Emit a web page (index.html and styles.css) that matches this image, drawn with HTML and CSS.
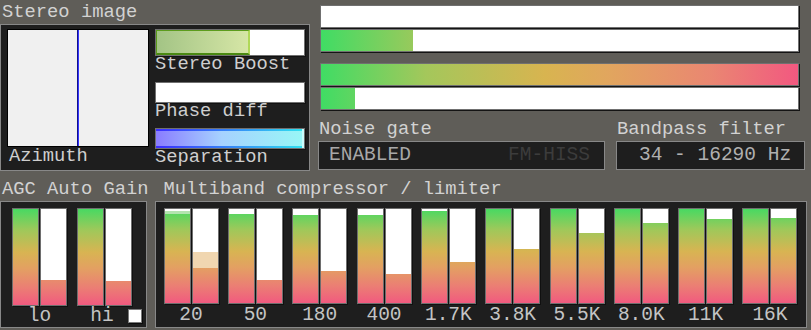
FILE: index.html
```html
<!DOCTYPE html>
<html lang="en">
<head>
    <meta charset="UTF-8">
    <meta name="viewport" content="width=device-width, initial-scale=1.0">
    <title>Audio Processor</title>
    <link rel="stylesheet" href="styles.css">
</head>
<body>
    <div class="top">
        <section class="stereo">
            <div class="title">Stereo image</div>
            <div class="panel stereo-panel">
                <div class="azimuth-col">
                    <div class="azimuth"><div class="azimuth-line"></div></div>
                    <div class="caption azimuth-caption">Azimuth</div>
                </div>
                <div class="stereo-meters">
                    <div class="hbar boost"><div class="boost-fill"></div></div>
                    <div class="caption">Stereo Boost</div>
                    <div class="hbar phase"></div>
                    <div class="caption">Phase diff</div>
                    <div class="hbar sep"><div class="sep-fill"></div></div>
                    <div class="caption">Separation</div>
                </div>
            </div>
        </section>

        <section class="levels">
            <div class="hmeter first"></div>
            <div class="hmeter"><div class="hfill" style="width:92px"></div></div>
            <div class="hmeter second"><div class="hfill" style="width:477px"></div></div>
            <div class="hmeter"><div class="hfill" style="width:34px"></div></div>

            <div class="boxes">
                <div class="gate">
                    <div class="title box-title">Noise gate</div>
                    <div class="panel readout gate-readout">
                        <span>ENABLED</span>
                        <span class="dim">FM-HISS</span>
                    </div>
                </div>
                <div class="bandpass">
                    <div class="title box-title">Bandpass filter</div>
                    <div class="panel readout band-readout">34 - 16290 Hz</div>
                </div>
            </div>
        </section>
    </div>

    <div class="bottom">
        <section class="agc">
            <div class="title">AGC Auto Gain</div>
            <div class="panel agc-panel">
                <div class="agc-bars">
                    <div class="pair">
                        <div class="vbar"><div class="vfill" style="height:96px"></div></div>
                        <div class="vbar"><div class="vfill" style="height:25px"></div></div>
                    </div>
                    <div class="pair">
                        <div class="vbar"><div class="vfill" style="height:96px"></div></div>
                        <div class="vbar"><div class="vfill" style="height:24px"></div></div>
                    </div>
                </div>
                <div class="agc-labels">
                    <span class="scale lo">lo</span>
                    <span class="scale hi">hi</span>
                    <span class="check"></span>
                </div>
            </div>
        </section>

        <section class="multiband">
            <div class="title mb-title">Multiband compressor / limiter</div>
            <div class="panel mb-panel">
                <div class="band">
                    <div class="pair">
                        <div class="vbar"><div class="peak-green"></div><div class="vfill" style="height:89px"></div></div>
                        <div class="vbar"><div class="peak-peach"></div><div class="vfill" style="height:35px"></div></div>
                    </div>
                    <span class="scale">20</span>
                </div>
                <div class="band">
                    <div class="pair">
                        <div class="vbar"><div class="vfill" style="height:89px"></div></div>
                        <div class="vbar"><div class="vfill" style="height:23px"></div></div>
                    </div>
                    <span class="scale">50</span>
                </div>
                <div class="band">
                    <div class="pair">
                        <div class="vbar"><div class="vfill" style="height:88px"></div></div>
                        <div class="vbar"><div class="vfill" style="height:32px"></div></div>
                    </div>
                    <span class="scale">180</span>
                </div>
                <div class="band">
                    <div class="pair">
                        <div class="vbar"><div class="vfill" style="height:88px"></div></div>
                        <div class="vbar"><div class="vfill" style="height:29px"></div></div>
                    </div>
                    <span class="scale">400</span>
                </div>
                <div class="band">
                    <div class="pair">
                        <div class="vbar"><div class="vfill" style="height:92px"></div></div>
                        <div class="vbar"><div class="vfill" style="height:41px"></div></div>
                    </div>
                    <span class="scale">1.7K</span>
                </div>
                <div class="band">
                    <div class="pair">
                        <div class="vbar"><div class="vfill" style="height:94px"></div></div>
                        <div class="vbar"><div class="vfill" style="height:54px"></div></div>
                    </div>
                    <span class="scale">3.8K</span>
                </div>
                <div class="band">
                    <div class="pair">
                        <div class="vbar"><div class="vfill" style="height:94px"></div></div>
                        <div class="vbar"><div class="vfill" style="height:70px"></div></div>
                    </div>
                    <span class="scale">5.5K</span>
                </div>
                <div class="band">
                    <div class="pair">
                        <div class="vbar"><div class="vfill" style="height:94px"></div></div>
                        <div class="vbar"><div class="vfill" style="height:80px"></div></div>
                    </div>
                    <span class="scale">8.0K</span>
                </div>
                <div class="band">
                    <div class="pair">
                        <div class="vbar"><div class="vfill" style="height:94px"></div></div>
                        <div class="vbar"><div class="vfill" style="height:84px"></div></div>
                    </div>
                    <span class="scale">11K</span>
                </div>
                <div class="band">
                    <div class="pair">
                        <div class="vbar"><div class="vfill" style="height:94px"></div></div>
                        <div class="vbar"><div class="vfill" style="height:85px"></div></div>
                    </div>
                    <span class="scale">16K</span>
                </div>
            </div>
        </section>
    </div>
</body>
</html>
```

FILE: styles.css
```css
html, body {
    margin: 0;
    background: #5f5d58;
}
body {
    width: 811px;
    height: 330px;
    overflow: hidden;
    font-family: "Liberation Mono", "DejaVu Sans Mono", monospace;
    color: #d2d2d2;
}
.title {
    font-size: 18.8px;
    line-height: 24px;
    height: 24px;
    padding-left: 2px;
    white-space: nowrap;
}
.panel {
    box-sizing: border-box;
    background: #1e1e1e;
    border: 1px solid #888;
}
.caption {
    font-size: 18.8px;
    line-height: 17px;
    color: #cfcfcf;
    white-space: nowrap;
}

/* top row */
.top {
    display: flex;
    height: 171px;
}
.stereo {
    width: 310px;
}
.stereo-panel {
    height: 147px;
    display: flex;
    padding: 4px 0 0 6px;
}
.azimuth-col {
    width: 142px;
}
.azimuth {
    box-sizing: border-box;
    width: 142px;
    height: 118px;
    background: #f0f0f0;
    border: 1px solid #000;
    position: relative;
}
.azimuth-line {
    position: absolute;
    left: 69px;
    top: 0;
    bottom: 0;
    width: 2px;
    background: linear-gradient(to right, #10108a 50%, #3434ff 50%);
}
.azimuth-caption {
    margin-top: 1px;
    padding-left: 2px;
}
.stereo-meters {
    margin-left: 6px;
    width: 150px;
}
.hbar {
    box-sizing: border-box;
    width: 150px;
    border: 1px solid #707070;
    box-shadow: 1px 1px 0 #111;
    background: #fff;
    display: flex;
}
.boost {
    height: 27px;
}
.boost-fill {
    box-sizing: border-box;
    width: 94px;
    background: linear-gradient(to right, #a3c485, #d6e6a6);
    border-top: 1px solid #5c9c1c;
    border-left: 1px solid #5c9c1c;
    border-bottom: 2px solid #4a8a12;
    border-right: 2px solid #b0d858;
}
.phase {
    height: 21px;
    margin-top: 9px;
}
.sep {
    height: 21px;
    margin-top: 8px;
}
.sep-fill {
    flex: 1;
    border-right: 2px solid #c8fcfc;
    background:
        linear-gradient(to right, #3a2cff, #30e0f0) top / 100% 2px no-repeat,
        linear-gradient(to right, #3a2cff, #30e0f0) bottom / 100% 2px no-repeat,
        linear-gradient(to right, #8a7cff, #a6d2ff 45%, #98f6f6);
}

.levels {
    margin-left: 8px;
    width: 487px;
}
.hmeter {
    box-sizing: border-box;
    width: 479px;
    height: 23px;
    margin: 1px 0 0 2px;
    border: 1px solid #707070;
    box-shadow: 1px 1px 0 #141414;
    background: #fff;
}
.hmeter.first {
    margin-top: 5px;
}
.hmeter.second {
    margin-top: 11px;
}
.hfill {
    height: 100%;
    background: linear-gradient(to right, #40dc64, #a4c75b 22%, #d8b450 47%, #e1a65e 60%, #ea8672 82%, #f25880);
    background-size: 477px 100%;
}
.boxes {
    display: flex;
    margin-top: 7px;
    gap: 11px;
}
.box-title {
    padding-left: 1px;
}
.readout {
    height: 29px;
    font-size: 19.5px;
    line-height: 27px;
    color: #a8a8a8;
    white-space: nowrap;
}
.gate-readout {
    width: 287px;
    display: flex;
    justify-content: space-between;
    padding: 0 14px 0 10px;
}
.dim {
    color: #3c3c3c;
}
.bandpass .readout {
    width: 189px;
    padding-left: 22px;
    color: #b0b0b0;
}

/* bottom row */
.bottom {
    display: flex;
    gap: 6px;
    margin-top: 6px;
}
.agc-panel {
    width: 147px;
    height: 127px;
    padding: 6px 0 0 11px;
}
.agc-bars {
    display: flex;
    gap: 10px;
}
.pair {
    display: flex;
    gap: 1px;
}
.vbar {
    width: 25px;
    height: 94px;
    border: 1px solid #6e6e6e;
    box-shadow: 1px 1px 0 #101010;
    background: #fff;
    display: flex;
    flex-direction: column;
    justify-content: flex-end;
}
.agc .vbar {
    height: 96px;
}
.vfill {
    background: linear-gradient(to bottom, #48d962, #9fc85a 22%, #d8b452 45%, #e3a062 62%, #eb7e74 82%, #f15a7f);
    background-size: 25px 94px;
    background-position: bottom;
}
.agc .vfill {
    background-size: 25px 96px;
}
.peak-green {
    height: 3px;
    background: #b4e4b0;
}
.peak-peach {
    height: 16px;
    background: #f0d6b0;
}
.scale {
    font-size: 19.5px;
    line-height: 17px;
    color: #c4c4c4;
    white-space: nowrap;
}
.agc-labels {
    display: flex;
    margin-top: 2px;
}
.lo {
    width: 55px;
    text-align: center;
}
.hi {
    width: 50px;
    margin-left: 10px;
    text-align: center;
}
.check {
    width: 12px;
    height: 12px;
    margin: 1px 0 0 1px;
    background: #fff;
    border: 1px solid #7a7a7a;
    box-shadow: 1px 1px 0 #0c0c0c;
}

.multiband {
    width: 652px;
}
.mb-title {
    padding-left: 9px;
}
.mb-panel {
    height: 127px;
    display: flex;
    justify-content: space-between;
    padding: 6px 8px 0 8px;
}
.band {
    display: flex;
    flex-direction: column;
    align-items: center;
}
.band .scale {
    margin-top: 3px;
}
```
